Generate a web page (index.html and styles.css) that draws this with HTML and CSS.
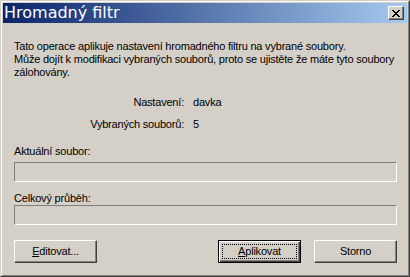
FILE: index.html
```html
<!DOCTYPE html>
<html lang="cs">
<head>
<meta charset="utf-8">
<title>Hromadný filtr</title>
<link rel="stylesheet" href="styles.css">
</head>
<body>
<div class="window">
  <div class="frame">
    <div class="titlebar">
      <span class="title">Hromadný filtr</span>
      <span class="close">
        <svg width="8" height="7" viewBox="0 0 8 7" shape-rendering="crispEdges">
          <path fill="#000" d="M0 0h2v1H0zM6 0h2v1H6zM1 1h2v1H1zM5 1h2v1H5zM2 2h4v1H2zM3 3h2v1H3zM2 4h4v1H2zM1 5h2v1H1zM5 5h2v1H5zM0 6h2v1H0zM6 6h2v1H6z"/>
        </svg>
      </span>
    </div>
    <div class="content">
      <div class="intro">
        <div>Tato operace aplikuje nastavení hromadného filtru na vybrané soubory.</div>
        <div>Může dojít k modifikaci vybraných souborů, proto se ujistěte že máte tyto soubory</div>
        <div>zálohovány.</div>
      </div>
      <div class="info">
        <span class="info-label">Nastavení:</span><span class="info-value">davka</span>
        <span class="info-label">Vybraných souborů:</span><span class="info-value">5</span>
      </div>
      <div class="field field-current">
        <div class="field-label">Aktuální soubor:</div>
        <div class="progress"></div>
      </div>
      <div class="field field-total">
        <div class="field-label">Celkový průběh:</div>
        <div class="progress"></div>
      </div>
      <div class="buttons">
        <span class="btn"><u>E</u>ditovat...</span>
        <span class="spacer"></span>
        <span class="btn btn-default"><u>A</u>plikovat</span>
        <span class="btn">Storno</span>
      </div>
    </div>
  </div>
</div>
</body>
</html>
```
FILE: styles.css
```css
html, body {
  margin: 0;
  padding: 0;
  background: #d4d0c8;
}

.window {
  width: 410px;
  height: 277px;
  box-sizing: border-box;
  border: 1px solid;
  border-color: #d4d0c8 #404040 #404040 #d4d0c8;
  background: #d4d0c8;
}

.frame {
  height: 100%;
  box-sizing: border-box;
  border: 1px solid;
  border-color: #ffffff #808080 #808080 #ffffff;
  padding: 1px;
  display: flex;
  flex-direction: column;
}

.titlebar {
  height: 20px;
  flex: none;
  display: flex;
  align-items: center;
  background: linear-gradient(to right, #0a246a, #a6caf0);
  padding-left: 1px;
}

.title {
  flex: 1;
  font-family: "DejaVu Sans", sans-serif;
  font-size: 16px;
  line-height: 20px;
  color: #ffffff;
  white-space: nowrap;
}

.close {
  width: 16px;
  height: 14px;
  box-sizing: border-box;
  margin-right: 3px;
  background: #d4d0c8;
  border: 1px solid;
  border-color: #ffffff #404040 #404040 #ffffff;
  box-shadow: inset -1px -1px #808080;
  display: flex;
  align-items: center;
  justify-content: center;
}

.close svg {
  display: block;
  margin-left: -1px;
}

.content {
  flex: 1;
  padding: 17px 10px 0 11px;
  font-family: "Liberation Sans", Arial, sans-serif;
  font-size: 11px;
  line-height: 13px;
  letter-spacing: -0.2px;
  color: #000000;
  display: flex;
  flex-direction: column;
}

.intro div {
  white-space: nowrap;
}

.info {
  margin-top: 17px;
  display: grid;
  grid-template-columns: 170px auto;
  column-gap: 9px;
  row-gap: 9px;
}

.info-label {
  text-align: right;
}

.field-current {
  margin-top: 14px;
}

.field-total {
  margin-top: 10px;
}

.field-current .field-label {
  margin-bottom: 4px;
}

.field-total .field-label {
  margin-bottom: 0;
}

.progress {
  height: 20px;
  box-sizing: border-box;
  border: 1px solid;
  border-color: #808080 #ffffff #ffffff #808080;
}

.buttons {
  margin-top: 15px;
  display: flex;
  gap: 13px;
}

.spacer {
  flex: 1;
}

.btn {
  position: relative;
  width: 83px;
  height: 23px;
  box-sizing: border-box;
  border: 1px solid;
  border-color: #ffffff #404040 #404040 #ffffff;
  box-shadow: inset -1px -1px #808080;
  display: flex;
  align-items: center;
  justify-content: center;
}

.btn-default {
  border-color: #000000;
  box-shadow: inset 1px 1px #ffffff, inset -1px -1px #404040, inset -2px -2px #808080;
}

.btn-default::after {
  content: "";
  position: absolute;
  left: 3px;
  top: 3px;
  right: 3px;
  bottom: 3px;
  border: 1px dotted #000000;
}

.btn u {
  text-decoration: underline;
}
```
